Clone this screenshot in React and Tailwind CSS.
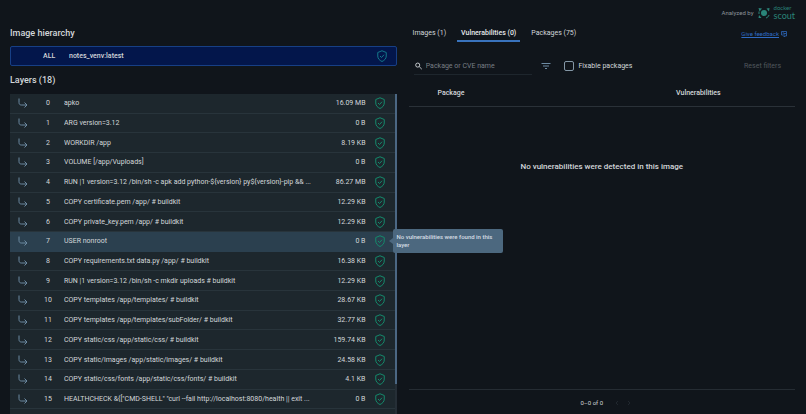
import React, { useState } from 'react';

const LAYERS = [
  ['apko', '16.09 MB'],
  ['ARG version=3.12', '0 B'],
  ['WORKDIR /app', '8.19 KB'],
  ['VOLUME [/app/Vuploads]', '0 B'],
  ['RUN |1 version=3.12 /bin/sh -c apk add python-${version} py${version}-pip && ...', '86.27 MB'],
  ['COPY certificate.pem /app/ # buildkit', '12.29 KB'],
  ['COPY private_key.pem /app/ # buildkit', '12.29 KB'],
  ['USER nonroot', '0 B'],
  ['COPY requirements.txt data.py /app/ # buildkit', '16.38 KB'],
  ['RUN |1 version=3.12 /bin/sh -c mkdir uploads # buildkit', '12.29 KB'],
  ['COPY templates /app/templates/ # buildkit', '28.67 KB'],
  ['COPY templates /app/templates/subFolder/ # buildkit', '32.77 KB'],
  ['COPY static/css /app/static/css/ # buildkit', '159.74 KB'],
  ['COPY static/images /app/static/images/ # buildkit', '24.58 KB'],
  ['COPY static/css/fonts /app/static/css/fonts/ # buildkit', '4.1 KB'],
  ['HEALTHCHECK &{["CMD-SHELL" "curl --fail http://localhost:8080/health || exit ...', '0 B'],
];

const TABS = ['Images (1)', 'Vulnerabilities (0)', 'Packages (75)'];

function Shield({ className }) {
  return (
    <svg className={className} width="12" height="12" viewBox="0 0 24 24" fill="none" stroke="currentColor" strokeWidth="2" strokeLinejoin="round">
      <path d="M12 1.5l8.500 3.500v7c0 5-3.400 8.800-8.500 11-5.100-2.200-8.500-6-8.500-11V5z" />
      <path d="M8 12l3 3 5-5.500" />
    </svg>
  );
}

function LayerArrow() {
  return (
    <svg className="text-[#6d8ba3]" width="10" height="10" viewBox="0 0 20 20" fill="none" stroke="currentColor" strokeWidth="2">
      <path d="M2 1v8c0 3 1.500 5 4.500 5H18" />
      <path d="M13 9l5 5-5 5" />
    </svg>
  );
}

function ScoutLogo() {
  return (
    <span className="flex items-center gap-1 text-[#2a8479]">
      <svg width="12" height="12" viewBox="0 0 24 24" fill="none" stroke="currentColor" strokeWidth="2">
        <circle cx="12" cy="12" r="6" fill="currentColor" stroke="none" />
        <path d="M1 2l7 1-5 6zM23 2l-1 7-5-6zM1 22l1-6 5 6z" fill="currentColor" stroke="none" />
        <path d="M22 16c-1 3-3 5-6 6M2 9v5" />
      </svg>
      <span className="flex flex-col font-['Lato',sans-serif]">
        <span className="text-[6px] leading-[7px]">docker</span>
        <span className="text-[9px] leading-[10px]">scout</span>
      </span>
    </span>
  );
}

function LayerRow({ index, command, size, active }) {
  return (
    <li className={'flex items-center min-h-0 pl-2 pr-[9px] border-b ' + (active ? 'bg-[#2b404f] border-[#2b404f]' : 'border-[#28343b]')}>
      <LayerArrow />
      <span className="w-[36px] shrink-0 pl-1 text-center">{index}</span>
      <span className="flex-1 min-w-0 truncate">{command}</span>
      <span className="pl-2 pr-2">{size}</span>
      <span className="relative flex">
        <Shield className="text-[#158a6c]" />
        {active && (
          <span role="tooltip" className="absolute z-10 left-[19px] top-1/2 -translate-y-1/2 w-[110px] p-1 rounded-xs bg-[#4c687f] text-[6px] leading-[8px] font-medium text-[#d5dde4]">
            <span className="absolute -left-1 top-1/2 -translate-y-1/2 border-y-3 border-r-4 border-y-transparent border-r-[#4c687f]" />
            No vulnerabilities were found in this layer
          </span>
        )}
      </span>
    </li>
  );
}

export default function App() {
  const [tab, setTab] = useState(1);
  const [query, setQuery] = useState('');
  const [fixable, setFixable] = useState(false);

  return (
    <div className="h-screen flex gap-3 overflow-hidden bg-[#10151b] font-['Roboto',sans-serif] text-[7px] leading-[10px] text-[#d3d7da]">
      <section className="flex-1 min-w-0 flex flex-col pl-[10px] pt-[27px]">
        <h2 className="text-[9px] leading-[12px] font-medium">Image hierarchy</h2>
        <div className="mt-[7px] h-5 shrink-0 flex items-center border border-[#173f85] rounded-xs bg-[#03164b] font-medium pl-8 pr-2">
          <span className="w-[26px]">ALL</span>
          <span className="flex-1">notes_venv:latest</span>
          <Shield className="text-[#14788a]" />
        </div>
        <h2 className="mt-2 text-[9px] leading-[12px] font-medium">Layers (18)</h2>
        <div className="mt-2 flex-1 flex items-start bg-[#1d272d]">
          <ol className="flex-1 min-w-0 h-[335px] grid auto-rows-fr">
            {LAYERS.map(([command, size], i) => (
              <LayerRow key={i} index={i} command={command} size={size} active={i === 7} />
            ))}
            <li />
          </ol>
          <div className="w-[2px] self-stretch bg-[#252e36]">
            <div className="h-[290px] bg-[#4b6783]" />
          </div>
        </div>
      </section>

      <section className="flex-1 min-w-0 flex flex-col mr-[11px]">
        <div className="pt-[4px] flex items-center justify-end gap-1 text-[6px] text-[#8b9299]">
          Analyzed by
          <ScoutLogo />
        </div>
        <div className="mt-[7px] flex items-start justify-between">
          <div role="tablist" className="flex gap-[7px]">
            {TABS.map((label, i) => (
              <button
                key={label}
                role="tab"
                aria-selected={tab === i}
                onClick={() => setTab(i)}
                className={'px-1 pb-[2px] border-b-2 ' + (tab === i ? 'border-[#3973bd] font-medium text-[#e6e9eb]' : 'border-transparent')}
              >
                {label}
              </button>
            ))}
          </div>
          <a href="#feedback" className="mt-px mr-2 flex items-center gap-[2px] text-[6px] text-[#2f6bc4]">
            <span className="underline">Give feedback</span>
            <svg width="6" height="6" viewBox="0 0 12 12" fill="none" stroke="currentColor" strokeWidth="1.500">
              <path d="M4 8H1V1h10v4M6 5h5v5H8l-2 2zM3 4h3" />
            </svg>
          </a>
        </div>

        <div className="mt-[15px] flex items-center">
          <label className="ml-[5px] w-[118px] h-[18px] flex items-center gap-1 pl-[1px] border-b border-[#1e262d]">
            <svg width="8" height="8" viewBox="0 0 16 16" fill="none" stroke="currentColor" strokeWidth="2">
              <circle cx="6" cy="6" r="4.500" />
              <path d="M9.500 9.500L15 15" />
            </svg>
            <input
              type="text"
              aria-label="Package or CVE name"
              placeholder="Package or CVE name"
              value={query}
              onChange={e => setQuery(e.target.value)}
              className="w-full outline-none placeholder:text-[#777e85]"
            />
          </label>
          <button aria-label="Filter" className="ml-[9px] text-[#6d8ba3]">
            <svg width="10" height="8" viewBox="0 0 20 16" fill="none" stroke="currentColor" strokeWidth="2">
              <path d="M1 3h18M4 8h12M8 13h4" />
            </svg>
          </button>
          <label className="ml-[13px] flex items-center gap-[5px]">
            <input
              type="checkbox"
              checked={fixable}
              onChange={e => setFixable(e.target.checked)}
              className="appearance-none size-[10px] border border-[#8497a6] rounded-xs checked:bg-[#3973bd]"
            />
            Fixable packages
          </label>
          <button className="ml-auto mr-[14px] text-[#50575d]">Reset filters</button>
        </div>

        <table className="mt-[5px] w-full table-fixed">
          <thead>
            <tr className="h-[26px] border-b border-[#2a3138]">
              <th className="w-[22%] font-medium">Package</th>
              <th />
              <th className="w-1/2 font-medium">Vulnerabilities</th>
            </tr>
          </thead>
        </table>
        <p className="mt-[54px] text-center text-[8px] leading-[12px] font-medium">No vulnerabilities were detected in this image</p>

        <footer className="mt-auto h-[25px] shrink-0 flex items-center justify-center gap-3 pl-2 pt-px border-t border-[#252c33] text-[6px]">
          <span>0–0 of 0</span>
          <span className="flex gap-2 text-[#20272e]">
            <button disabled aria-label="Previous page">
              <svg width="4" height="6" viewBox="0 0 4 6" fill="none" stroke="currentColor"><path d="M3 1L1 3l2 2" /></svg>
            </button>
            <button disabled aria-label="Next page">
              <svg width="4" height="6" viewBox="0 0 4 6" fill="none" stroke="currentColor"><path d="M1 1l2 2-2 2" /></svg>
            </button>
          </span>
        </footer>
      </section>
    </div>
  );
}
